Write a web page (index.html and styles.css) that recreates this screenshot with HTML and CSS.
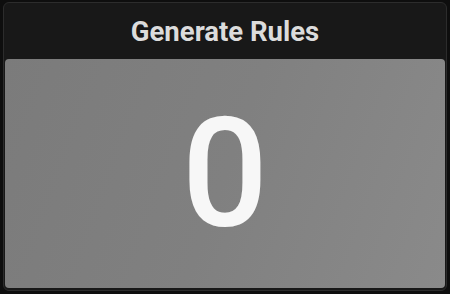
FILE: index.html
```html
<!DOCTYPE html>
<html lang="en">
<head>
    <meta charset="UTF-8">
    <meta name="viewport" content="width=device-width, initial-scale=1.0">
    <title>Generate Rules</title>
    <link rel="stylesheet" href="styles.css">
</head>
<body>
    <div class="card">
        <div class="card-title">Generate Rules</div>
        <div class="card-value">
            <span class="value">0</span>
        </div>
    </div>
</body>
</html>
```

FILE: styles.css
```css
body {
    margin: 0;
    padding: 2px 3px 3px 3px;
    background-color: #0e0e0e;
    font-family: Roboto, "Liberation Sans", sans-serif;
    height: 294px;
    box-sizing: border-box;
}
.card {
    height: 100%;
    box-sizing: border-box;
    background: #181818;
    border: 1px solid #2c2c2c;
    border-radius: 6px;
    padding: 0 1px 2px 1px;
    display: flex;
    flex-direction: column;
}
.card-title {
    height: 56px;
    display: flex;
    align-items: center;
    justify-content: center;
    color: #dcdcdc;
    font-size: 27.5px;
    font-weight: 700;
}
.card-value {
    flex: 1;
    display: flex;
    align-items: center;
    justify-content: center;
    background: linear-gradient(110deg, #7b7b7b 0%, #808080 50%, #8a8a8a 100%);
    border-radius: 4px;
}
.value {
    color: #f7f7f7;
    font-size: 152px;
    font-weight: 500;
    line-height: 1;
}
```
